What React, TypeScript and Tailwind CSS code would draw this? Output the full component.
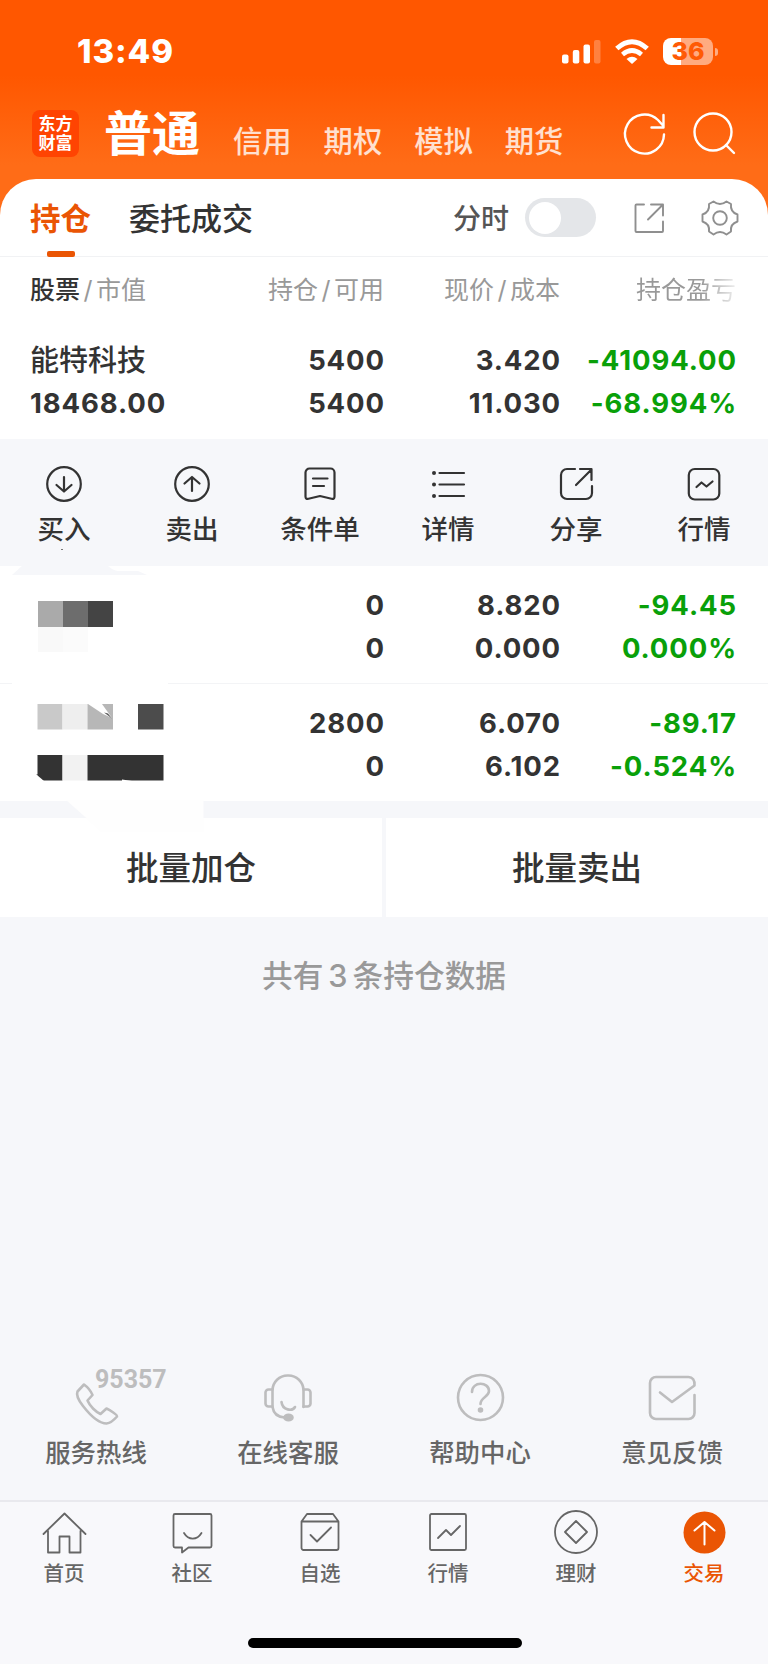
import React from "react";

type IconProps = { className?: string };

type Holding = {
  id: string;
  amount: string;
  available: string;
  price: string;
  cost: string;
  profit: string;
  rate: string;
};

const marketTabs = ["信用", "期权", "模拟", "期货"];

const holdings: Holding[] = [
  { id: "a", amount: "5400", available: "5400", price: "3.420", cost: "11.030", profit: "-41094.00", rate: "-68.994%" },
  { id: "b", amount: "0", available: "0", price: "8.820", cost: "0.000", profit: "-94.45", rate: "0.000%" },
  { id: "c", amount: "2800", available: "0", price: "6.070", cost: "6.102", profit: "-89.17", rate: "-0.524%" },
];

const Svg = ({
  size,
  stroke = 2.2,
  children,
  className,
}: {
  size: number;
  stroke?: number;
  children: React.ReactNode;
  className?: string;
}) => (
  <svg
    width={size}
    height={size}
    viewBox={`0 0 ${size} ${size}`}
    fill="none"
    stroke="currentColor"
    strokeWidth={stroke}
    strokeLinecap="round"
    strokeLinejoin="round"
    overflow="visible"
    className={className}
  >
    {children}
  </svg>
);

const actions = [
  {
    label: "买入",
    icon: (
      <Svg size={40}>
        <circle cx="20" cy="20" r="16.8" />
        <path d="M20 13v14M12.5 21l7.5 6.5 7.5-6.5" />
      </Svg>
    ),
  },
  {
    label: "卖出",
    icon: (
      <Svg size={40}>
        <circle cx="20" cy="20" r="16.8" />
        <path d="M20 27V13M12.5 19.5L20 13l7.5 6.5" />
      </Svg>
    ),
  },
  {
    label: "条件单",
    icon: (
      <Svg size={40}>
        <path d="M9.5 4.5h21a4 4 0 0 1 4 4v24q0 3-3 2.3L20 32l-11.5 2.8q-3 .7-3-2.3V8.5a4 4 0 0 1 4-4z" />
        <path d="M13 14.5h14.5M13 22h11" />
      </Svg>
    ),
  },
  {
    label: "详情",
    icon: (
      <Svg size={40}>
        <path d="M11.5 9H36M11.5 20.5H36M11.5 32H36" />
        <path strokeWidth={4} d="M6 9h.01M6 20.5h.01M6 32h.01" />
      </Svg>
    ),
  },
  {
    label: "分享",
    icon: (
      <Svg size={40}>
        <path d="M19 5h-8a6 6 0 0 0-6 6v18a6 6 0 0 0 6 6h19a6 6 0 0 0 6-6v-7M24 5h11.5v11M35 6L20 21" />
      </Svg>
    ),
  },
  {
    label: "行情",
    icon: (
      <Svg size={40}>
        <rect x="4.8" y="5" width="30.5" height="30.5" rx="6" />
        <path d="M12.5 23l5-4.5 5 4 6-5" />
      </Svg>
    ),
  },
];

const services = [
  {
    label: "服务热线",
    icon: (
      <div className="relative h-12 w-12">
        <Svg size={48} stroke={2.6}>
          <path d="M12 11.5L5.5 18.5C4 22 5.5 26 11 33C18 42 27 50.5 34.5 50.5C39 50 42 47 45 43.5C45.5 42 38 37 34.5 35.5L28.5 41C24 39 18 33.5 15.5 27.5L20.5 22C19 18.5 15.5 14 12 11.5z" />
        </Svg>
        <span className="absolute -top-[7px] left-[23px] font-['Roboto'] text-[25px] leading-[28px] font-bold text-[#bdbdbe]">
          95357
        </span>
      </div>
    ),
  },
  {
    label: "在线客服",
    icon: (
      <Svg size={48} stroke={2.6}>
        <path d="M8.5 34V17a15 15 0 0 1 15-14.5h1a15 15 0 0 1 15 14.5v17M8.5 34c1 6.5 5.5 10 12 10.5" />
        <path d="M8.5 16.5H4.5a3 3 0 0 0-3 3v11a3 3 0 0 0 3 3h4M39.5 16.5h4a3 3 0 0 1 3 3v11a3 3 0 0 1-3 3h-4" />
        <path d="M17.5 29c1 8.5 11 9.5 13.5 5" />
        <ellipse cx="24.5" cy="44.5" rx="4" ry="2.7" fill="currentColor" />
      </Svg>
    ),
  },
  {
    label: "帮助中心",
    icon: (
      <Svg size={48} stroke={2.6}>
        <circle cx="24.5" cy="24.5" r="22.5" />
        <path d="M16 19c0-11 17-10.5 17-1 0 6-8.5 6-8.5 13" />
        <circle cx="24.5" cy="37" r="1.5" fill="currentColor" />
      </Svg>
    ),
  },
  {
    label: "意见反馈",
    icon: (
      <Svg size={48} stroke={2.6}>
        <path d="M46.5 22v18a6 6 0 0 1-6 6H8a6 6 0 0 1-6-6V10a6 6 0 0 1 6-6h32.5c4 0 6.5 3 6 8.500L24 29l-12-9.500" />
      </Svg>
    ),
  },
];

const bottomTabs = [
  {
    label: "首页",
    icon: (
      <Svg size={44} stroke={1.8}>
        <path d="M1.5 23L22.5 2.5 43.5 23M6 20v21.5h11.5V25.5h10v16H38.5V20" />
      </Svg>
    ),
  },
  {
    label: "社区",
    icon: (
      <Svg size={44} stroke={1.8}>
        <path d="M5 3h35a1.5 1.5 0 0 1 1.5 1.5v30.500a1.5 1.5 0 0 1-1.5 1.5H18.500l-6.500 5v-5H5A1.5 1.5 0 0 1 3.5 35V4.5A1.5 1.5 0 0 1 5 3z" />
        <path d="M14 22c4.5 7.5 13 7.5 17.5 0" />
      </Svg>
    ),
  },
  {
    label: "自选",
    icon: (
      <Svg size={44} stroke={1.8}>
        <path d="M3.5 10.5L9 3h26l5.5 7.5V37a2 2 0 0 1-2 2h-33a2 2 0 0 1-2-2zM3.5 10.5h37M12.5 24l6.5 6.5 14-14" />
      </Svg>
    ),
  },
  {
    label: "行情",
    icon: (
      <Svg size={44} stroke={1.8}>
        <rect x="4" y="3" width="36" height="36" rx="1.5" />
        <path d="M12 27l8-8 5 5 9-9" />
      </Svg>
    ),
  },
  {
    label: "理财",
    icon: (
      <Svg size={44} stroke={1.8}>
        <circle cx="22" cy="21" r="21" />
        <path d="M22 10L33 21 22 32 11 21z" />
      </Svg>
    ),
  },
  {
    label: "交易",
    active: true,
    icon: (
      <Svg size={44} stroke={2}>
        <circle cx="22.5" cy="21.5" r="21" fill="#ea5504" stroke="none" />
        <path stroke="#fff" d="M22.5 33.5V11M12.500 19.5L22.5 11l10 8.5" />
      </Svg>
    ),
  },
];

const ExportIcon = ({ className }: IconProps) => (
  <Svg size={32} stroke={1.9} className={className}>
    <path d="M11 2.5H3.5a1 1 0 0 0-1 1V29a1 1 0 0 0 1 1H29a1 1 0 0 0 1-1v-9.5M18 2.5h12v11M29.5 3L15 17.5" />
  </Svg>
);

const GearIcon = ({ className }: IconProps) => (
  <Svg size={38} stroke={1.9} className={className}>
    <circle cx="19" cy="19" r="6.8" />
    <path d="M12.5 2.5Q19 7.5 25.5 2.5L30 5Q29 13 36.5 15.5V22.5Q29 25 30 32.5L25.5 35.5Q19 30.5 12.5 35.5L8 32.5Q9 25 1.5 22.5V15.5Q9 13 8 5z" />
  </Svg>
);

const StatusBar = () => (
  <div className="flex h-[103px] items-center justify-between pr-[50px] pl-[77px]">
    <span className="-mt-[2px] text-[33px] leading-[40px] font-extrabold tracking-[0.9px]">13:49</span>
    <div className="flex items-center">
      <svg width="40" height="26" viewBox="0 0 40 26" fill="#fff">
        <rect x="0" y="15.5" width="6.5" height="9" rx="2" />
        <rect x="10.8" y="11" width="6.5" height="13.5" rx="2" />
        <rect x="21.5" y="5.5" width="6.5" height="19" rx="2" />
        <rect x="32" y="1" width="6.5" height="23.5" rx="2" opacity=".25" />
      </svg>
      <svg width="34" height="26" viewBox="0 0 34 26" fill="none" stroke="#fff" strokeWidth="5" className="ml-[13px]">
        <path d="M1.8 9.5Q17-4 32.2 9.5" />
        <path d="M7.5 15.5Q17 7.5 26.5 15.5" strokeWidth="4.6" />
        <path d="M11.5 20Q17 15.5 22.5 20L17 25z" fill="#fff" stroke="none" />
      </svg>
      <div className="ml-[14px] flex h-[27px] w-[50px] items-center justify-center rounded-[8px] bg-[linear-gradient(90deg,#fff_0_18px,#ffab80_18px)] text-[25px] leading-[27px] font-extrabold text-[#ff5a05]">
        36
      </div>
      <div className="ml-[2px] h-[8px] w-[3px] rounded-r-full bg-[#ffab80]" />
    </div>
  </div>
);

const Header = () => (
  <div className="flex h-[76px] items-start">
    <div className="mt-[7px] ml-8 flex h-[47px] w-[47px] flex-col items-center justify-center rounded-[8px] bg-[#ff4402] text-[17px] leading-[19px] font-bold">
      <span>东方</span>
      <span>财富</span>
    </div>
    <span className="ml-[25px] text-[48px] leading-[62px] font-bold">普通</span>
    <div className="ml-[33px] flex gap-[32px] pt-[17px] text-[29.3px] leading-[44px] font-medium text-white/80">
      {marketTabs.map((tab) => (
        <span key={tab}>{tab}</span>
      ))}
    </div>
    <Svg size={44} stroke={2.4} className="mt-[9px] ml-[60px]">
      <path d="M41 22.5A19.5 19.5 0 1 1 35 8L40 13.500M40.500 3v12.500h-12" />
    </Svg>
    <Svg size={44} stroke={2.4} className="mt-[9px] ml-[25px]">
      <circle cx="21" cy="20" r="18.5" />
      <path d="M34 33l8 8" />
    </Svg>
  </div>
);

const TabRow = () => (
  <div className="flex h-[78px] items-center border-b border-[#f1f2f4] pl-[30px]">
    <div className="relative flex h-full items-center pt-[3px] text-[30.5px] font-bold text-[#ea5504]">
      持仓
      <div className="absolute -bottom-px left-[17px] h-[6px] w-[28px] rounded-[2px] bg-[#ea5504]" />
    </div>
    <span className="ml-[38px] pt-[3px] text-[31px] font-medium">委托成交</span>
    <span className="ml-auto pt-[3px] text-[28px] font-medium text-[#555]">分时</span>
    <div className="ml-4 flex h-[39px] w-[71px] items-center rounded-full bg-[#e4e6e9] pl-1">
      <div className="h-8 w-8 rounded-full bg-white" />
    </div>
    <ExportIcon className="ml-[37px] text-[#8f8f8f]" />
    <GearIcon className="mr-[29px] ml-[36px] text-[#8f8f8f]" />
  </div>
);

const Slash = () => <span className="mx-[3.5px]">/</span>;

const TableHead = () => (
  <div className="flex h-[64px] items-center pt-[3px] pr-[32px] pl-[30px] text-[25px] text-[#999]">
    <div className="w-[174px]">
      <span className="font-medium text-[#333]">股票</span>
      <Slash />
      市值
    </div>
    <div className="w-[180px] text-right">持仓<Slash />可用</div>
    <div className="w-[176px] text-right">现价<Slash />成本</div>
    <div className="flex-1 bg-[linear-gradient(90deg,#999_80%,#eee)] bg-clip-text text-right text-transparent">
      持仓盈亏
    </div>
  </div>
);

const Pair = ({ top, bottom, className }: { top: string; bottom: string; className: string }) => (
  <div className={`flex flex-col items-end text-[27.5px] leading-[43px] font-bold tracking-[0.9px] ${className}`}>
    <span>{top}</span>
    <span>{bottom}</span>
  </div>
);

const HoldingRow = ({ item, className, children }: { item: Holding; className: string; children: React.ReactNode }) => (
  <div className={`flex bg-white pr-[31px] pl-[30px] ${className}`}>
    <div className="w-[174px]">{children}</div>
    <Pair top={item.amount} bottom={item.available} className="w-[181px]" />
    <Pair top={item.price} bottom={item.cost} className="w-[176px]" />
    <Pair top={item.profit} bottom={item.rate} className="flex-1 text-[#09a009]" />
  </div>
);

const MaskedSmall = () => (
  <div className="mt-[17px] ml-2">
    <div className="flex h-[26px]">
      <div className="w-[25px] bg-[#aaa]" />
      <div className="w-[25px] bg-[#6d6d6d]" />
      <div className="w-[25px] bg-[#444]" />
    </div>
    <div className="flex h-[25px]">
      <div className="w-[25px] bg-[#f9f9f9]" />
      <div className="w-[25px] bg-[#fbfbfb]" />
    </div>
  </div>
);

const MaskedLarge = () => (
  <svg width="140" height="80" viewBox="0 0 140 80">
    <rect x="7.5" y="0" width="25" height="25.5" fill="#c9c9c9" />
    <rect x="32.5" y="0" width="25" height="25.5" fill="#eee" />
    <rect x="57.5" y="0" width="25.5" height="25.5" fill="#b7b7b7" />
    <path d="M58 0h14l10 14-9-4z" fill="#fff" />
    <path d="M74 8.5l4 1 4 5-4-3z" fill="#555" />
    <rect x="108" y="0" width="25.5" height="25.5" fill="#4c4c4c" />
    <rect x="7.5" y="51" width="25" height="25.5" fill="#333" />
    <rect x="32.5" y="51" width="25" height="25.5" fill="#f2f2f2" />
    <rect x="57.5" y="51" width="76" height="25.5" fill="#333" />
    <path d="M7 71l7 6H6z" fill="#fff" />
    <path d="M6 70l4 1v2z" fill="#333" />
    <path d="M92 75.5l10 1.5H92z" fill="#fff" />
  </svg>
);

export default function App() {
  return (
    <div className="flex h-[1664px] w-[768px] flex-col overflow-hidden bg-[#f6f7fa] font-['Inter','Noto_Sans_CJK_SC',sans-serif] text-[#333] [font-optical-sizing:none]">
      <div className="h-[219px] bg-[linear-gradient(180deg,#ff5700_0,#ff5700_75px,#ff6c17_165px)] text-white">
        <StatusBar />
        <Header />
      </div>

      <div className="-mt-[40px] rounded-t-[36px] bg-white">
        <TabRow />
        <TableHead />
        <HoldingRow item={holdings[0]} className="h-[118px] pt-[18px]">
          <div className="text-[29px] leading-[43px] font-medium">能特科技</div>
          <div className="text-[27.5px] leading-[43px] font-bold tracking-[0.9px]">18468.00</div>
        </HoldingRow>
      </div>

      <div className="relative grid h-[127px] grid-cols-6 pt-[25px]">
        {actions.map((action) => (
          <div key={action.label} className="flex flex-col items-center">
            {action.icon}
            <span className="mt-[6px] text-[26.5px] leading-[38px] font-medium">{action.label}</span>
          </div>
        ))}
        <div className="absolute top-[110px] left-[61px] h-px w-[2px] bg-[#777]" />
      </div>

      <div className="relative">
        <HoldingRow item={holdings[1]} className="h-[118px] border-b border-[#f3f4f6] pt-[18px]">
          <MaskedSmall />
        </HoldingRow>
        <svg width="150" height="10" viewBox="0 0 150 10" className="absolute top-0 left-0">
          <path d="M22 0H108Q113 4.5 118 5H138L147 9H12z" fill="#f6f7fa" />
        </svg>
        <div className="absolute bottom-0 left-[12px] h-px w-[156px] bg-white" />
      </div>
      <div className="relative">
        <HoldingRow item={holdings[2]} className="h-[117px] pt-[18px]">
          <div className="pt-[2px]">
            <MaskedLarge />
          </div>
        </HoldingRow>
        <svg width="140" height="34" viewBox="0 0 140 34" className="absolute top-[116px] left-[66px]">
          <path d="M0 0H137.5V32H36z" fill="#fefefe" />
        </svg>
      </div>

      <div className="mt-[17px] flex h-[99px] gap-1 text-[32.5px] font-medium">
        <div className="flex flex-1 items-center justify-center bg-white pt-[4px]">批量加仓</div>
        <div className="flex flex-1 items-center justify-center bg-white pt-[4px]">批量卖出</div>
      </div>

      <div className="mt-[36px] text-center text-[30.7px] leading-[46px] font-medium text-[#999]">
        共有<span className="mx-[5px]">3</span>条持仓数据
      </div>

      <div className="mt-auto grid h-[127px] grid-cols-4">
        {services.map((service) => (
          <div key={service.label} className="flex flex-col items-center text-[#bdbdbe]">
            {service.icon}
            <span className="mt-[14px] text-[25.4px] leading-[36px] font-medium text-[#666]">{service.label}</span>
          </div>
        ))}
      </div>

      <div className="h-[164px] border-t-2 border-[#e9e9ee] bg-[#f8f8fb]">
        <div className="grid grid-cols-6 pt-[9px]">
          {bottomTabs.map((tab) => (
            <div
              key={tab.label}
              className={`flex flex-col items-center ${tab.active ? "text-[#ea5504]" : "text-[#666]"}`}
            >
              {tab.icon}
              <span className="mt-[4px] text-[20.5px] leading-[30px] font-medium">{tab.label}</span>
            </div>
          ))}
        </div>
        <div className="mx-auto mt-[49px] h-[10px] w-[274px] translate-x-px rounded-full bg-black" />
      </div>
    </div>
  );
}
